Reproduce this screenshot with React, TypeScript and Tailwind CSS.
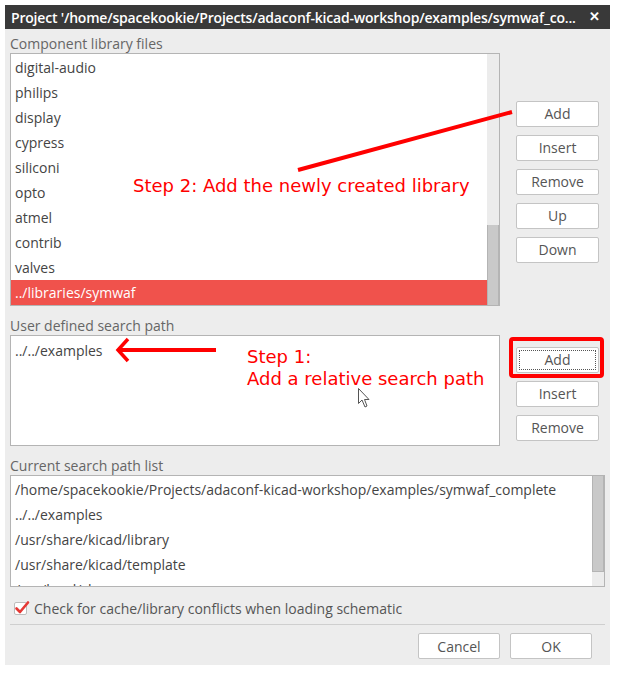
import React from "react";

const ui = { fontFamily: '"Open Sans", "Noto Sans", sans-serif' };
const anno = { fontFamily: '"DejaVu Sans", sans-serif' };

function Btn({ label, focus }: { label: string; focus?: boolean }) {
  return (
    <div className="w-[83px] h-[26px] bg-white border border-[#c4c4c4] rounded-[2px] flex items-center justify-center text-[14px] text-[#555] relative">
      {focus && <div className="absolute inset-[2px] border border-dotted border-[#555]" />}
      <span>{label}</span>
    </div>
  );
}

const libs = ["digital-audio", "philips", "display", "cypress", "siliconi", "opto", "atmel", "contrib", "valves"];
const paths = [
  "/home/spacekookie/Projects/adaconf-kicad-workshop/examples/symwaf_complete",
  "../../examples",
  "/usr/share/kicad/library",
  "/usr/share/kicad/template",
  "/usr/local/share",
];

export default function App() {
  return (
    <div className="w-[619px] h-[675px] bg-white relative overflow-hidden" style={ui}>
      <div className="ml-[5px] pt-[5px]">
        <div className="w-[605px] h-[660px] bg-[#ededed] flex flex-col">
          {/* title bar */}
          <div className="h-[24px] bg-[#393939] text-white flex items-center pl-[6px] pr-[10px] gap-[10px]">
            <span className="flex-1 min-w-0 text-[14px] font-semibold whitespace-nowrap tracking-[-0.2px]">
              Project '/home/spacekookie/Projects/adaconf-kicad-workshop/examples/symwaf_co...
            </span>
            <span className="text-[13px] font-bold shrink-0">✕</span>
          </div>

          <div className="pl-[5px] pr-[5px] flex flex-col">
            {/* section 1 */}
            <div className="h-[18px] mt-[6px] text-[14px] leading-[18px] text-[#666]">Component library files</div>
            <div className="flex items-center">
              <div className="w-[490px] h-[253px] bg-white border border-[#b4b4b4] flex">
                <div className="flex-1 pt-[1px] flex flex-col text-[14px] text-[#444]">
                  {libs.map((l) => (
                    <div key={l} className="h-[25px] leading-[25px] pl-[4px]">{l}</div>
                  ))}
                  <div className="h-[25px] leading-[25px] pl-[4px] bg-[#f0524c] text-white">../libraries/symwaf</div>
                </div>
                <div className="w-[12px] bg-[#ececec] flex flex-col justify-end">
                  <div className="h-[80px] bg-[#c9c9c9] border-l border-r border-[#b4b4b4]" />
                </div>
              </div>
              <div className="ml-[16px] flex flex-col gap-[8px] mt-[4px]">
                <Btn label="Add" />
                <Btn label="Insert" />
                <Btn label="Remove" />
                <Btn label="Up" />
                <Btn label="Down" />
              </div>
            </div>

            {/* section 2 */}
            <div className="h-[18px] mt-[11px] text-[14px] leading-[18px] text-[#666]">User defined search path</div>
            <div className="flex items-center">
              <div className="w-[490px] h-[111px] bg-white border border-[#b4b4b4] pt-[2px] text-[14px] text-[#444]">
                <div className="h-[25px] leading-[25px] pl-[4px]">../../examples</div>
              </div>
              <div className="ml-[16px] flex flex-col gap-[8px] mt-[6px]">
                <Btn label="Add" focus />
                <Btn label="Insert" />
                <Btn label="Remove" />
              </div>
            </div>

            {/* section 3 */}
            <div className="h-[18px] mt-[11px] text-[14px] leading-[18px] text-[#666]">Current search path list</div>
            <div className="w-[595px] h-[112px] bg-white border border-[#b4b4b4] flex overflow-hidden">
              <div className="flex-1 pt-[1px] flex flex-col text-[14px] text-[#444] overflow-hidden">
                {paths.map((p) => (
                  <div key={p} className="h-[25px] leading-[25px] pl-[4px] whitespace-nowrap shrink-0">{p}</div>
                ))}
              </div>
              <div className="w-[12px] bg-[#ececec] flex flex-col">
                <div className="h-[96px] bg-[#c9c9c9] border-l border-r border-b border-[#b4b4b4]" />
              </div>
            </div>

            {/* checkbox */}
            <div className="flex items-center h-[20px] mt-[11px] pl-[4px]">
              <div className="w-[13px] h-[13px] bg-white border border-[#bdbdbd] rounded-[2px] relative">
                <svg className="absolute -left-[1px] -top-[4px]" width="17" height="17" viewBox="0 0 17 17">
                  <path d="M2.5 9.5 L6 13 L14 3.5" fill="none" stroke="#e53935" strokeWidth="2.6" strokeLinecap="round" strokeLinejoin="round" />
                </svg>
              </div>
              <span className="ml-[7px] text-[14px] text-[#555]">Check for cache/library conflicts when loading schematic</span>
            </div>

            <div className="h-px bg-[#cfcfcf] mt-[6px]" />

            <div className="flex justify-end gap-[10px] mt-[8px] pr-[13px]">
              <div className="w-[82px] h-[26px] bg-white border border-[#c4c4c4] rounded-[2px] flex items-center justify-center text-[14px] text-[#555]">Cancel</div>
              <div className="w-[82px] h-[26px] bg-white border border-[#c4c4c4] rounded-[2px] flex items-center justify-center text-[14px] text-[#555]">OK</div>
            </div>
          </div>
        </div>
      </div>

      {/* annotations overlay */}
      <svg className="absolute left-0 top-0 pointer-events-none" width="619" height="675">
        <line x1="298" y1="170" x2="512" y2="112" stroke="#ff0000" strokeWidth="4" />
        <line x1="216" y1="350" x2="120" y2="350" stroke="#ff0000" strokeWidth="4" />
        <polyline points="128,339 118,350 128,361" fill="none" stroke="#ff0000" strokeWidth="3.5" />
        <rect x="511" y="339" width="91" height="37" rx="2" fill="none" stroke="#ff0000" strokeWidth="4" />
        <path d="M358.5 388.5 L358.5 403.5 L362 400 L365 407 L367 406 L364.5 399.5 L369 399.5 Z" fill="white" stroke="#555" strokeWidth="1" strokeLinejoin="round" />
      </svg>
      <div className="absolute left-[133px] top-[175px] text-[18px] leading-[22px] text-[#ff0000] whitespace-nowrap" style={anno}>
        Step 2: Add the newly created library
      </div>
      <div className="absolute left-[247px] top-[346px] text-[18px] leading-[22px] text-[#ff0000] whitespace-nowrap" style={anno}>
        <div>Step 1:</div>
        <div>Add a relative search path</div>
      </div>
    </div>
  );
}
